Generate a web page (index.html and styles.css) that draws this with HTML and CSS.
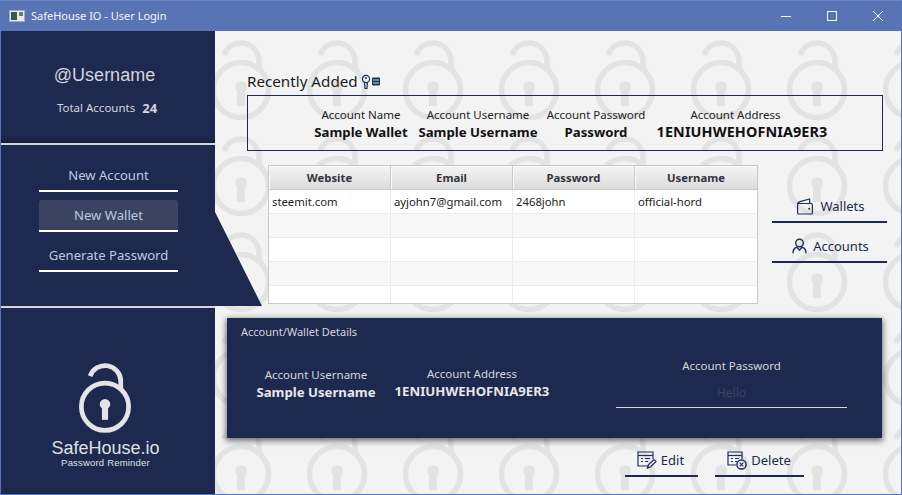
FILE: index.html
```html
<!DOCTYPE html>
<html lang="en">
<head>
<meta charset="utf-8">
<title>SafeHouse IO - User Login</title>
<link rel="stylesheet" href="styles.css">
</head>
<body>
<svg class="defs" width="0" height="0" aria-hidden="true">
  <symbol id="lock" viewBox="0 0 64 80">
    <g fill="none" stroke="currentColor" stroke-width="5.4">
      <circle cx="32" cy="50" r="27"/>
      <path d="M15 15A18 18 0 0 1 50 20.5V30"/>
    </g>
    <circle cx="32" cy="47" r="6" fill="currentColor"/>
    <rect x="28.5" y="47" width="7" height="18" fill="currentColor"/>
  </symbol>
</svg>
<div class="window">
  <header class="titlebar">
    <svg class="app-icon" width="16" height="14" viewBox="0 0 16 14"><rect x=".5" y="1.5" width="15" height="11" fill="#e8ecec" stroke="#aab"/><rect x="2" y="3" width="6" height="8" fill="#2d5a52"/><rect x="10" y="3" width="4" height="4" fill="#5f7f78"/></svg>
    <span class="title">SafeHouse IO - User Login</span>
    <div class="controls">
      <svg class="ctl" width="12" height="12" viewBox="0 0 12 12"><path d="M1 6.5H11" stroke="#fff" fill="none"/></svg>
      <svg class="ctl" width="12" height="12" viewBox="0 0 12 12"><rect x="1.5" y="1.5" width="9" height="9" stroke="#fff" fill="none"/></svg>
      <svg class="ctl" width="12" height="12" viewBox="0 0 12 12"><path d="M1 1L11 11M11 1L1 11" stroke="#fff" fill="none"/></svg>
    </div>
  </header>
  <div class="body">
    <aside class="sidebar">
      <section class="profile">
        <div class="handle">@Username</div>
        <div class="total"><span>Total Accounts</span><b>24</b></div>
      </section>
      <nav class="nav">
        <a class="nav-btn">New Account</a>
        <a class="nav-btn active">New Wallet</a>
        <a class="nav-btn">Generate Password</a>
        <div class="wedge"></div>
      </nav>
      <section class="brand">
        <svg class="logo"><use href="#lock"/></svg>
        <div class="brand-name">SafeHouse.io</div>
        <div class="brand-sub">Password Reminder</div>
      </section>
    </aside>
    <main class="content">
      <h1 class="recent-title">Recently Added
        <svg class="key" width="20" height="16" viewBox="0 0 20 16"><g fill="none" stroke="#1d2f5c" stroke-width="1.2"><circle cx="5" cy="5" r="3.6"/><path d="M3.6 8.4L4 14.5H6L6.4 8.4"/></g><circle cx="5" cy="4" r="1" fill="#1d2f5c"/><rect x="11" y="3.5" width="8" height="8" rx="1" fill="#1d2f5c"/><path d="M12 6h6M12 9h6" stroke="#cfd6e6" stroke-width="1"/></svg>
      </h1>
      <section class="recent">
        <div class="field f1"><span>Account Name</span><b>Sample Wallet</b></div>
        <div class="field f2"><span>Account Username</span><b>Sample Username</b></div>
        <div class="field f3"><span>Account Password</span><b>Password</b></div>
        <div class="field f4"><span>Account Address</span><b>1ENIUHWEHOFNIA9ER3</b></div>
      </section>
      <div class="middle">
        <table class="grid">
          <thead><tr><th>Website</th><th>Email</th><th>Password</th><th>Username</th></tr></thead>
          <tbody>
            <tr><td>steemit.com</td><td>ayjohn7@gmail.com</td><td>2468john</td><td>official-hord</td></tr>
            <tr class="alt"><td></td><td></td><td></td><td></td></tr>
            <tr><td></td><td></td><td></td><td></td></tr>
            <tr class="alt"><td></td><td></td><td></td><td></td></tr>
            <tr class="last"><td></td><td></td><td></td><td></td></tr>
          </tbody>
        </table>
        <div class="side-actions">
          <a class="action">
            <svg width="18" height="17" viewBox="0 0 18 17"><g fill="none" stroke="#1d2f5c" stroke-width="1.2"><path d="M1.6 5.5H15a1.4 1.4 0 0 1 1.4 1.4V15a1 1 0 0 1-1 1H2.6a1 1 0 0 1-1-1z"/><path d="M1.6 5.5C2 4.4 3 4 4 3.6L13.6 1V5.5"/></g><circle cx="13.2" cy="10.8" r="1" fill="#1d2f5c"/></svg>
            Wallets</a>
          <a class="action">
            <svg width="15" height="16" viewBox="0 0 15 16"><g fill="none" stroke="#1d2f5c" stroke-width="1.4"><circle cx="7.5" cy="5" r="3.8"/><path d="M1 15.2C1 11.5 3 9.6 5 9.2L7.5 12.2L10 9.2C12 9.6 14 11.5 14 15.2"/></g></svg>
            Accounts</a>
        </div>
      </div>
      <section class="details">
        <div class="details-title">Account/Wallet Details</div>
        <div class="dfield d1"><span>Account Username</span><b>Sample Username</b></div>
        <div class="dfield d2"><span>Account Address</span><b>1ENIUHWEHOFNIA9ER3</b></div>
        <div class="dpass">
          <span>Account Password</span>
          <div class="dinput">Hello</div>
        </div>
      </section>
      <div class="bottom-actions">
        <a class="action edit">
          <svg width="20" height="18" viewBox="0 0 20 18"><g fill="none" stroke="#1d2f5c" stroke-width="1.2"><path d="M12 15H1V1H16V8"/><path d="M1 4.5H16"/><path d="M4 7.5H6M8 7.5H13M4 10.5H6M8 10.5H11" /><path d="M10.5 17L11.2 14L17 8.5L19 10.5L13.5 16Z"/></g></svg>
          Edit</a>
        <a class="action del">
          <svg width="20" height="19" viewBox="0 0 20 19"><g fill="none" stroke="#1d2f5c" stroke-width="1.2"><path d="M9 14H1V1H15V8"/><path d="M1 4.5H15"/><path d="M4 7.5H6M8 7.5H12M4 10.5H6M8 10.5H10"/><circle cx="14.5" cy="13.5" r="4.6" stroke-width="1.5"/><path d="M12.7 11.7L16.3 15.3M16.3 11.7L12.7 15.3"/></g></svg>
          Delete</a>
      </div>
    </main>
  </div>
</div>
</body>
</html>
```
FILE: styles.css
```css
* { box-sizing: border-box; }
html, body { margin: 0; padding: 0; }
body { width: 902px; height: 495px; overflow: hidden; font-family: "Noto Sans", "Open Sans", sans-serif; }
.defs { position: absolute; }
.window { width: 902px; height: 495px; border: 1px solid #5874b4; border-top-color: #6a84bf; display: flex; flex-direction: column; }
.titlebar { height: 30px; flex: none; background: #5874b4; color: #fff; display: flex; align-items: center; padding-left: 8px; }
.app-icon { flex: none; }
.title { margin-left: 6px; margin-top: -1px; font-size: 11px; color: #f2f4fa; }
.controls { margin-left: auto; display: flex; gap: 34px; padding-right: 17px; }
.ctl { display: block; }
.body { flex: 1; display: flex; min-height: 0; }
.sidebar { width: 214px; flex: none; background: #1d294f; display: flex; flex-direction: column; position: relative; z-index: 1; }
.profile { height: 114px; border-bottom: 2px solid #d4d5da; box-shadow: inset 0 -6px 6px -5px rgba(0,0,0,.45); display: flex; flex-direction: column; align-items: center; color: #d4d6dc; padding-top: 31px; }
.handle { font-family: "Liberation Sans", Arial, sans-serif; font-size: 18px; line-height: 26px; margin-right: 7px; }
.total { margin-top: 11px; display: flex; align-items: center; gap: 7px; font-size: 11.5px; line-height: 18px; margin-right: 2px; }
.total b { font-size: 13px; }
.nav { height: 163px; border-bottom: 2px solid #d4d5da; padding: 15px 0 0 38px; position: relative; display: flex; flex-direction: column; gap: 8px; }
.nav-btn { width: 139px; height: 32px; border-bottom: 2px solid #fff; color: #bccbe0; font-size: 13.1px; display: flex; align-items: center; justify-content: center; border-radius: 3px 3px 0 0; }
.nav-btn.active { background: #3a4462; }
.wedge { position: absolute; left: 214px; top: 67px; width: 47px; height: 94px; background: #1d294f; clip-path: polygon(0 0, 100% 100%, 0 100%); }
.brand { flex: 1; display: flex; flex-direction: column; align-items: center; color: #dfe0e4; font-family: "Liberation Sans", Arial, sans-serif; padding-top: 55px; padding-right: 5px; }
.logo { width: 56px; height: 70px; color: #e4e4e6; flex: none; margin-right: 1px; }
.brand-name { font-size: 18px; line-height: 20px; margin-top: 5px; }
.brand-sub { font-size: 9.5px; line-height: 10px; letter-spacing: .02em; }
.content { flex: 1; background-color: #f3f3f3; background-image: url("data:image/svg+xml,%3Csvg xmlns='http://www.w3.org/2000/svg' width='96' height='96'%3E%3Cg fill='none' stroke='%23e3e3e3' stroke-width='5.5'%3E%3Ccircle cx='48' cy='58' r='27.5'/%3E%3Cpath d='M31 23A18 18 0 0 1 66 28.5V38'/%3E%3C/g%3E%3Ccircle cx='48' cy='55' r='6' fill='%23e3e3e3'/%3E%3Crect x='44' y='55' width='8' height='19' fill='%23e3e3e3'/%3E%3C/svg%3E"); background-position: -22px 1px; display: flex; flex-direction: column; min-width: 0; }
.recent-title { margin: 38px 0 1px 32px; height: 25px; font-size: 15.2px; line-height: 25px; font-weight: 400; color: #1b1b1b; display: flex; align-items: center; gap: 3px; }
.key { display: block; }
.recent { margin: 0 0 0 32px; width: 636px; height: 56px; border: 1px solid #1d294f; position: relative; color: #111; }
.field { position: absolute; top: 11px; transform: translateX(-50%); display: flex; flex-direction: column; align-items: center; white-space: nowrap; }
.field span { font-size: 11.5px; line-height: 16px; color: #222; }
.field b { font-size: 13.2px; line-height: 18px; }
.f1 { left: 113px; } .f2 { left: 230px; } .f3 { left: 348px; } .f4 { left: 494px; }
.f4 span { margin-right: 13px; }
.f4 b { font-size: 14.4px; letter-spacing: .1px; }
.middle { margin: 14px 0 0 53px; display: flex; }
.grid { width: 490px; height: 139px; border-collapse: separate; border-spacing: 0; table-layout: fixed; border: 1px solid #c8c8c8; background: #fff; font-size: 11.3px; color: #222; }
.grid th { height: 24px; padding: 0; font-weight: 700; color: #33333c; background: linear-gradient(#f4f4f4, #dcdcdc); border-right: 1px solid #c8c8c8; border-bottom: 1px solid #c8c8c8; box-shadow: inset 1px 1px 0 #fafafa; }
.grid td { height: 24px; padding: 0 0 0 3px; border-right: 1px solid #ececec; border-bottom: 1px solid #ececec; white-space: nowrap; overflow: hidden; }
.grid th:last-child, .grid td:last-child { border-right: 0; }
.grid tr.alt td { background: #f8f8f8; }
.grid tr.last td { height: 17px; border-bottom: 0; }
.side-actions { margin: 26px 0 0 14px; display: flex; flex-direction: column; gap: 8px; }
.action { width: 115px; height: 32px; border-bottom: 2px solid #1d294f; color: #222a44; font-size: 13px; display: flex; align-items: center; justify-content: center; gap: 6px; padding-left: 2px; }
.details { margin: 14px 0 0 12px; width: 655px; height: 120px; background: #1d294f; box-shadow: 0 2px 6px 1px rgba(0,0,0,.55); position: relative; color: #d4d6dc; }
.details-title { position: absolute; left: 14px; top: 6px; font-size: 11px; line-height: 16px; }
.dfield { position: absolute; transform: translateX(-50%); display: flex; flex-direction: column; align-items: center; white-space: nowrap; }
.dfield span { font-size: 11.5px; line-height: 16px; }
.dfield b { font-size: 13.2px; line-height: 18px; color: #e6e7ea; }
.d1 { left: 89px; top: 49px; }
.d2 { left: 245px; top: 48px; }
.dpass { position: absolute; left: 389px; top: 40px; width: 231px; display: flex; flex-direction: column; align-items: center; font-size: 11.5px; line-height: 16px; }
.dinput { width: 231px; height: 35px; margin-top: -1px; border-bottom: 1px solid #d4d6dc; color: #3a4462; text-align: center; font-size: 12px; line-height: 40px; }
.bottom-actions { margin: 7px 0 0 410px; display: flex; gap: 17px; }
.action.edit { width: 73px; padding-left: 0; padding-right: 2px; gap: 4px; }
.action.del { width: 89px; padding-left: 0; padding-right: 1px; gap: 4px; }
```
